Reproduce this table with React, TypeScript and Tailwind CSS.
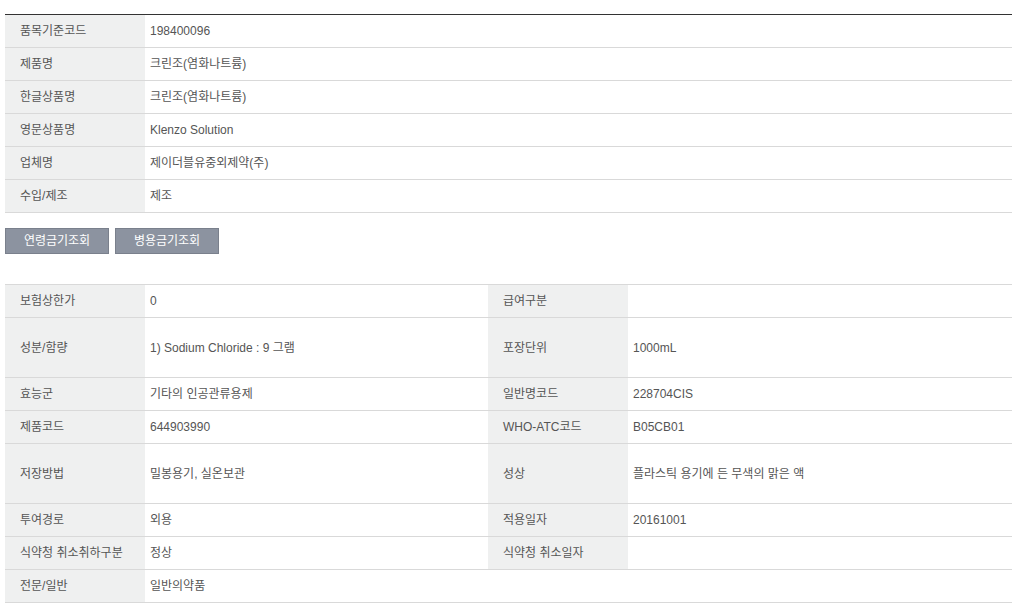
const basic: [string, string][] = [
  ["품목기준코드", "198400096"],
  ["제품명", "크린조(염화나트륨)"],
  ["한글상품명", "크린조(염화나트륨)"],
  ["영문상품명", "Klenzo Solution"],
  ["업체명", "제이더블유중외제약(주)"],
  ["수입/제조", "제조"],
];

type Row = { h: string; cells: [string, string, string?, string?] };

const detail: Row[] = [
  { h: "h-[33px]", cells: ["보험상한가", "0", "급여구분", ""] },
  { h: "h-[60px]", cells: ["성분/함량", "1) Sodium Chloride : 9 그램", "포장단위", "1000mL"] },
  { h: "h-[33px]", cells: ["효능군", "기타의 인공관류용제", "일반명코드", "228704CIS"] },
  { h: "h-[33px]", cells: ["제품코드", "644903990", "WHO-ATC코드", "B05CB01"] },
  { h: "h-[60px]", cells: ["저장방법", "밀봉용기, 실온보관", "성상", "플라스틱 용기에 든 무색의 맑은 액"] },
  { h: "h-[33px]", cells: ["투여경로", "외용", "적용일자", "20161001"] },
  { h: "h-[33px]", cells: ["식약청 취소취하구분", "정상", "식약청 취소일자", ""] },
  { h: "h-[33px]", cells: ["전문/일반", "일반의약품"] },
];

const th = "bg-[#eff0f0] pl-[15px] text-left font-normal align-middle";
const td = "pl-[5px] align-middle";

export default function App() {
  return (
    <div className="min-h-[615px] bg-white pt-[14px] pl-[5px] text-[12px] leading-[14px] text-[#555] [font-family:'Liberation_Sans','Noto_Sans_CJK_KR',sans-serif]">
      <table className="w-[1007px] table-fixed border-collapse border-t border-t-[#333]">
        <colgroup>
          <col className="w-[140px]" />
          <col />
        </colgroup>
        <tbody>
          {basic.map(([k, v]) => (
            <tr key={k} className="h-[33px] border-b border-[#d9d9d9]">
              <th className={th}>{k}</th>
              <td className={td}>{v}</td>
            </tr>
          ))}
        </tbody>
      </table>

      <div className="mt-[15px] flex gap-[6px]">
        <button className="h-[26px] w-[104px] border border-[#7a808c] bg-[#8c93a0] text-[12px] text-white">
          연령금기조회
        </button>
        <button className="h-[26px] w-[104px] border border-[#7a808c] bg-[#8c93a0] text-[12px] text-white">
          병용금기조회
        </button>
      </div>

      <table className="mt-[30px] w-[1007px] table-fixed border-collapse border-t border-t-[#d9d9d9]">
        <colgroup>
          <col className="w-[140px]" />
          <col className="w-[343px]" />
          <col className="w-[140px]" />
          <col />
        </colgroup>
        <tbody>
          {detail.map((r) => (
            <tr key={r.cells[0]} className={`${r.h} border-b border-[#d9d9d9]`}>
              <th className={th}>{r.cells[0]}</th>
              {r.cells.length === 2 ? (
                <td className={td} colSpan={3}>
                  {r.cells[1]}
                </td>
              ) : (
                <>
                  <td className={td}>{r.cells[1]}</td>
                  <th className={th}>{r.cells[2]}</th>
                  <td className={td}>{r.cells[3]}</td>
                </>
              )}
            </tr>
          ))}
        </tbody>
      </table>
    </div>
  );
}
